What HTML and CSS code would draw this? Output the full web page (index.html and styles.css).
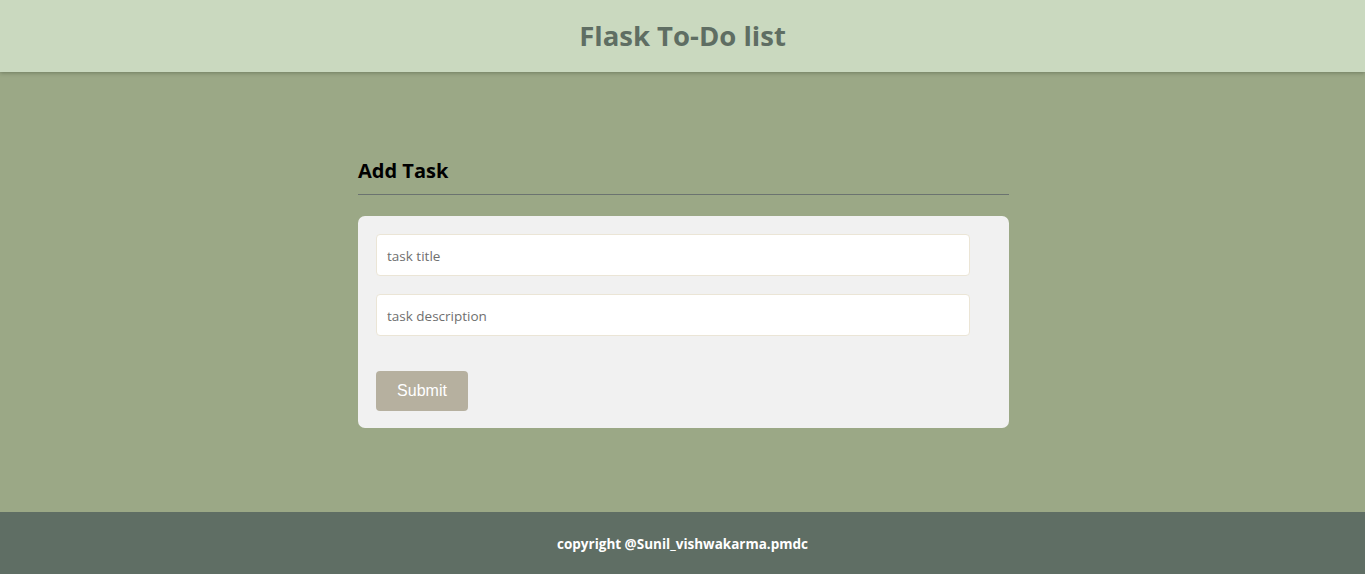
FILE: index.html
```html
<!DOCTYPE html>
<html>
<head>
<meta charset="utf-8">
<link rel="stylesheet" href="styles.css">
</head>
<body>
<header class="topbar"><h1 class="title">Flask To-Do list</h1></header>
<main class="main">
  <section class="panel">
    <h3 class="panel-title">Add Task</h3>
    <form class="card">
      <input class="field" type="text" placeholder="task title">
      <input class="field" type="text" placeholder="task description">
      <button class="submit" type="button">Submit</button>
    </form>
  </section>
</main>
<footer class="footer">copyright @Sunil_vishwakarma.pmdc</footer>
</body>
</html>
```
FILE: styles.css
```css
* { box-sizing: border-box; }
html, body { margin: 0; padding: 0; }
body {
  font-family: "Open Sans", "Noto Sans", sans-serif;
  background: #9ba886;
  height: 574px;
  display: flex;
  flex-direction: column;
}
.topbar {
  height: 72px;
  background: #cad9bf;
  display: flex;
  align-items: center;
  justify-content: center;
  padding-bottom: 2px;
  box-shadow: 0 1px 4px rgba(60, 70, 50, 0.45);
  position: relative;
  z-index: 1;
}
.title {
  margin: 0;
  font-size: 27.5px;
  font-weight: 700;
  color: #5f6e63;
}
.main {
  flex: 1;
  display: flex;
  justify-content: center;
  padding-top: 85px;
  padding-left: 2px;
}
.panel { width: 651px; }
.panel-title {
  margin: 0;
  font-size: 20px;
  font-weight: 700;
  color: #000;
  line-height: 28px;
  padding-bottom: 9px;
  border-bottom: 1px solid #6b7370;
}
.card {
  margin-top: 21px;
  background: #f1f1f1;
  border-radius: 7px;
  padding: 18px 18px 17px 18px;
  display: flex;
  flex-direction: column;
  align-items: flex-start;
}
.field {
  width: 594px;
  height: 42px;
  border: 1px solid #ebe5d6;
  border-radius: 4px;
  background: #fff;
  padding: 1px 10px 0;
  font-family: "Open Sans", "Noto Sans", sans-serif;
  font-size: 13.5px;
  color: #333;
  margin-bottom: 18px;
}
.field::placeholder { color: #6f6f6f; }
.submit {
  margin-top: 17px;
  width: 92px;
  height: 40px;
  border: none;
  border-radius: 4px;
  background: #b6b09f;
  color: #fff;
  font-family: "Liberation Sans", Arial, sans-serif;
  font-size: 16px;
}
.footer {
  height: 62px;
  background: #5f6e64;
  color: #fff;
  font-size: 13.5px;
  font-weight: 700;
  display: flex;
  align-items: center;
  justify-content: center;
  padding-top: 2px;
}
```
